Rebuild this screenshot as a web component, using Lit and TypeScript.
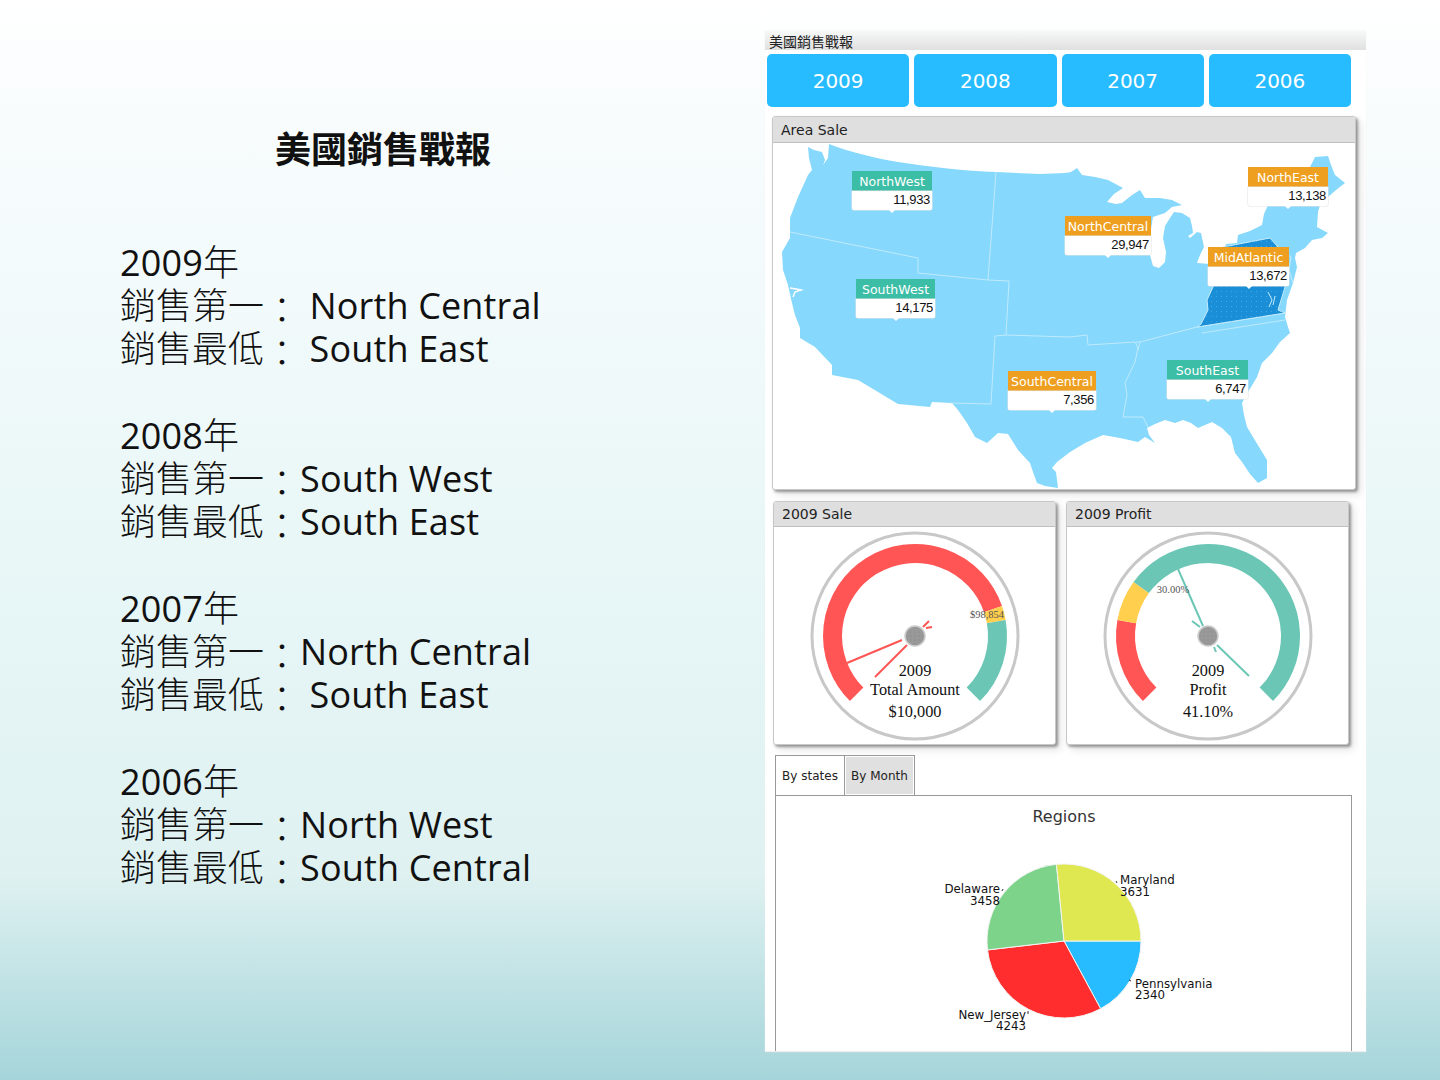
import { LitElement, html, css, svg } from "lit";
import { customElement } from "lit/decorators.js";

const US = `M829 144 C850 152 875 158 898 162 C930 167 965 171 996 172 L1040 174 L1065 173 L1071 172 L1077 168 L1082 175 L1095 177 L1108 180 L1123 188 L1114 194 L1107 202 L1116 204 L1122 203 L1132 195 L1140 190 L1145 198 L1160 198 L1172 200 L1182 205 L1172 207 L1165 213 L1153 217 L1150 235 L1150 255 L1153 266 L1159 268 L1165 262 L1166 252 L1163 238 L1165 226 L1170 218 L1174 212 L1182 213 L1190 218 L1192 226 L1193 233 L1188 236 L1190 238 L1197 232 L1201 233 L1204 247 L1200 255 L1197 263 L1210 264 L1222 263 L1224 250 L1226 244 L1237 243 L1238 235 L1250 231 L1262 225 L1264 214 L1268 205 L1300 180 L1310 167 L1315 157 L1328 156 L1331 165 L1335 175 L1345 183 L1336 190 L1328 197 L1320 205 L1318 212 L1317 227 L1328 233 L1322 238 L1312 240 L1305 248 L1296 253 L1295 258 L1297 267 L1293 283 L1287 300 L1285 317 L1288 327 L1290 333 L1280 342 L1272 353 L1262 363 L1257 377 L1248 392 L1242 403 L1244 415 L1247 427 L1256 442 L1267 460 L1267 478 L1258 483 L1250 474 L1242 462 L1235 453 L1231 437 L1222 428 L1212 422 L1198 428 L1191 423 L1183 420 L1175 423 L1165 420 L1155 424 L1147 428 L1149 435 L1155 443 L1145 437 L1138 442 L1120 438 L1103 435 L1085 443 L1070 452 L1057 462 L1052 468 L1056 472 L1058 488 L1045 486 L1037 483 L1033 472 L1030 463 L1018 450 L1008 434 L998 433 L987 443 L975 437 L967 423 L958 410 L952 403 L932 402 L930 407 L898 404 L858 380 L832 375 L832 365 L815 347 L800 338 L800 328 L795 315 L792 303 L788 285 L783 270 L782 252 L790 238 L790 218 L798 197 L808 175 L812 170 L809 158 L808 147 L814 150 L822 152 L825 160 L823 165 L828 158 L829 144 Z`;

const MID = `M1197 327 L1201 324 L1208 310 L1207 300 L1213 287 L1220 262 L1223 247 L1270 238 L1278 247 L1288 255 L1286 270 L1285 287 L1278 310 L1285 313 Z`;

type Lab = { n: string; v: string; x: number; y: number; w: number; c: string };
const LABELS: Lab[] = [
  { n: "NorthWest", v: "11,933", x: 852, y: 171, w: 80, c: "green" },
  { n: "NorthEast", v: "13,138", x: 1248, y: 167, w: 80, c: "orange" },
  { n: "NorthCentral", v: "29,947", x: 1065, y: 216, w: 86, c: "orange" },
  { n: "MidAtlantic", v: "13,672", x: 1208, y: 247, w: 81, c: "orange" },
  { n: "SouthWest", v: "14,175", x: 856, y: 279, w: 79, c: "green" },
  { n: "SouthCentral", v: "7,356", x: 1008, y: 371, w: 88, c: "orange" },
  { n: "SouthEast", v: "6,747", x: 1167, y: 360, w: 81, c: "green" },
];

function pt(cx: number, cy: number, r: number, a: number) {
  const t = ((a - 135) * Math.PI) / 180;
  return [cx + r * Math.sin(t), cy - r * Math.cos(t)];
}
function arc(cx: number, cy: number, r: number, a: number, b: number) {
  const [x1, y1] = pt(cx, cy, r, a);
  const [x2, y2] = pt(cx, cy, r, b);
  return `M${x1.toFixed(2)} ${y1.toFixed(2)} A${r} ${r} 0 ${b - a > 180 ? 1 : 0} 1 ${x2.toFixed(2)} ${y2.toFixed(2)}`;
}

type G = {
  title: string;
  bands: [number, number, string][];
  lines: [number, number, number, number][];
  color: string;
  tick: string;
  tx: number;
  ty: number;
  text: string[];
};
const RED = "#ff5555", YEL = "#ffcf4d", TEAL = "#6cc6b6";
const SALE: G = {
  title: "2009 Sale",
  bands: [[0, 206, RED], [206, 215, YEL], [215, 270, TEAL]],
  lines: [[-68, 27, -13, 4], [-40, 41, -8, 9], [11, -8, 17, -9], [8, -9, 14, -15]],
  color: RED,
  tick: "$98,854",
  tx: 72,
  ty: -22,
  text: ["2009", "Total Amount", "$10,000"],
};
const PROFIT: G = {
  title: "2009 Profit",
  bands: [[0, 55, RED], [55, 81, YEL], [81, 270, TEAL]],
  lines: [[-30, -67, -5, -10], [41, 40, 9, 9], [-16, -15, -8, -9], [6, 11, 8, 16]],
  color: TEAL,
  tick: "30.00%",
  tx: -35,
  ty: -47,
  text: ["2009", "Profit", "41.10%"],
};

const PIE = [
  { v: 2340, c: "#26bcff" },
  { v: 4243, c: "#ff2d2d" },
  { v: 3458, c: "#7dd389" },
  { v: 3631, c: "#dfe850" },
];
function pieSlices() {
  const total = PIE.reduce((s, p) => s + p.v, 0);
  let a = 0;
  const cx = 1064, cy = 941, r = 77;
  return PIE.map((p) => {
    const b = a + (p.v / total) * Math.PI * 2;
    const d = `M${cx} ${cy} L${cx + r * Math.cos(a)} ${cy + r * Math.sin(a)} A${r} ${r} 0 ${b - a > Math.PI ? 1 : 0} 1 ${cx + r * Math.cos(b)} ${cy + r * Math.sin(b)} Z`;
    a = b;
    return svg`<path d=${d} fill=${p.c} stroke="#f4f4f4" stroke-width="1"></path>`;
  });
}

@customElement("app-root")
export class AppRoot extends LitElement {
  static styles = css`
    :host {
      display: block;
      width: 1440px;
      height: 1080px;
      overflow: hidden;
      background: linear-gradient(to bottom, #ffffff 0, #f8fcfd 120px, #f2fafb 300px, #e7f6f6 600px, #dff1f1 875px, #a5d5da 1080px);
      font-family: "DejaVu Sans", sans-serif;
    }
    .page { display: flex; height: 1080px; }
    .left {
      width: 765px;
      box-sizing: border-box;
      padding: 123px 0 0 120px;
      font-family: "Open Sans", "Noto Sans CJK TC", sans-serif;
      color: #111;
      font-size: 36px;
    }
    .headline {
      width: 526px;
      text-align: center;
      font-weight: 700;
      font-family: "Noto Sans CJK TC", sans-serif;
      font-size: 36px;
      line-height: 48px;
      margin-bottom: 70px;
    }
    .block { margin-bottom: 44px; }
    .line { height: 43px; line-height: 43px; white-space: pre; letter-spacing: 0.15px; }
    .cjk { font-weight: 300; letter-spacing: 0; }
    .colon { display: inline-block; font-weight: 300; letter-spacing: 0; transform: translateY(5px); }
    .panel {
      width: 601px;
      height: 1021px;
      margin-top: 30px;
      background: #fff;
      overflow: hidden;
      box-shadow: 0 1px 1px #eee;
    }
    .bar {
      height: 20px;
      box-sizing: border-box;
      padding-left: 4px;
      line-height: 23px;
      font-size: 14px;
      color: #222;
      font-family: "Noto Sans CJK TC", sans-serif;
      background: linear-gradient(to bottom, #f8f9f9, #e0e0e0);
    }
    .years {
      display: grid;
      grid-template-columns: repeat(4, 142.25px);
      gap: 5px;
      margin: 4px 0 0 2px;
    }
    .year {
      height: 53px;
      border-radius: 5px;
      background: #26bcff;
      color: #fff;
      font-size: 20px;
      display: flex;
      align-items: center;
      justify-content: center;
    }
    .card {
      box-sizing: border-box;
      background: #fff;
      border: 1px solid #c8c8c8;
      border-radius: 3px;
      box-shadow: 2px 2px 3px rgba(0, 0, 0, 0.38), 5px 5px 8px rgba(0, 0, 0, 0.1);
      overflow: hidden;
    }
    .card-head {
      height: 25px;
      box-sizing: border-box;
      padding-left: 8px;
      line-height: 24px;
      font-size: 14px;
      color: #222;
      background-color: #dfdfdf;
      background-image: radial-gradient(#d4d4d4 0.6px, transparent 0.7px);
      background-size: 4px 4px;
      border-bottom: 1px solid #c0c0c0;
    }
    .map-card { width: 584px; height: 374px; margin: 9px 0 0 7px; }
    .map-card .card-head { height: 26px; line-height: 26px; }
    .map { position: relative; height: 346px; }
    .map svg { display: block; }
    .tag { position: absolute; box-sizing: border-box; height: 39px; }
    .tag-name {
      height: 20px;
      line-height: 21px;
      text-align: center;
      color: #fff;
      font-size: 12.5px;
    }
    .tag-name.green { background: #3cbda6; }
    .tag-name.orange { background: #ee9f1f; }
    .tag-value {
      position: relative;
      height: 19px;
      line-height: 18px;
      padding-right: 2px;
      box-sizing: border-box;
      text-align: right;
      background: #fff;
      color: #111;
      font-family: "Liberation Sans", sans-serif;
      font-size: 13px;
      letter-spacing: -0.35px;
      border-radius: 0 0 2px 2px;
      box-shadow: 0 0 0 0.5px #e4e4e4;
    }
    .tag-value::after {
      content: "";
      position: absolute;
      left: 50%;
      bottom: -3px;
      margin-left: -3px;
      border: 3px solid transparent;
      border-bottom: 0;
      border-top-color: #fff;
    }
    .gauges { display: flex; gap: 10px; margin: 11px 0 0 8px; }
    .gauge-card { width: 283px; height: 244px; }
    .gauge-card svg { display: block; }
    .tabs { margin: 10px 0 0 10px; width: 577px; }
    .tab-row { display: flex; height: 41px; }
    .tab {
      box-sizing: border-box;
      height: 41px;
      width: 70px;
      border: 1px solid #999;
      margin-right: -1px;
      font-size: 12px;
      color: #222;
      display: flex;
      align-items: center;
      justify-content: center;
      background: #fff;
    }
    .tab.off { width: 71px; background: #e0e0e0; box-shadow: inset 0 0 0 1px #fff; }
    .tab-box {
      box-sizing: border-box;
      margin-top: -1px;
      height: 400px;
      border: 1px solid #999;
    }
    .tab-box svg { display: block; }
    .gt { font-family: "Liberation Serif", serif; font-size: 16.3px; fill: #111; text-anchor: middle; }
    .tick { font-family: "Liberation Serif", serif; font-size: 10.5px; fill: #555; text-anchor: middle; }
    .pl { font-family: "DejaVu Sans", sans-serif; font-size: 11.8px; fill: #111; }
    .end { text-anchor: end; }
    .chart-title { font-family: "DejaVu Sans", sans-serif; font-size: 16px; fill: #333; text-anchor: middle; }
  `;

  gauge(g: G) {
    const cx = 141, cy = 109;
    return html`<div class="card gauge-card">
      <div class="card-head">${g.title}</div>
      <svg width="281" height="217" viewBox="0 0 281 217">
        <defs>
          <pattern id="hub" width="4" height="4" patternUnits="userSpaceOnUse">
            <circle cx="1" cy="1" r="0.5" fill="#777"></circle>
          </pattern>
        </defs>
        <circle cx=${cx} cy=${cy} r="103" fill="#fff" stroke="#c8c8c8" stroke-width="3"></circle>
        ${g.bands.map((b) => svg`<path d=${arc(cx, cy, 82.5, b[0], b[1])} fill="none" stroke=${b[2]} stroke-width="19"></path>`)}
        ${g.lines.map((l) => svg`<line x1=${cx + l[0]} y1=${cy + l[1]} x2=${cx + l[2]} y2=${cy + l[3]} stroke=${g.color} stroke-width="2"></line>`)}
        <circle cx=${cx} cy=${cy} r="10" fill="#999" stroke="#ccc" stroke-width="1.5"></circle>
        <circle cx=${cx} cy=${cy} r="8" fill="url(#hub)"></circle>
        <text class="tick" x=${cx + g.tx} y=${cy + g.ty + 4}>${g.tick}</text>
        <text class="gt" x=${cx} y="149">${g.text[0]}</text>
        <text class="gt" x=${cx} y="168">${g.text[1]}</text>
        <text class="gt" x=${cx} y="190">${g.text[2]}</text>
      </svg>
    </div>`;
  }

  line(l: string) {
    const parts = l.split(/([\u4e00-\u9fff]+|：)/).filter((p) => p);
    return html`<div class="line">${parts.map((p) =>
      p === "：" ? html`<span class="colon">${p}</span>` : /[\u4e00-\u9fff]/.test(p) ? html`<span class="cjk">${p}</span>` : p
    )}</div>`;
  }

  render() {
    const blocks = [
      ["2009年", "銷售第一： North Central", "銷售最低： South East"],
      ["2008年", "銷售第一：South West", "銷售最低：South East"],
      ["2007年", "銷售第一：North Central", "銷售最低： South East"],
      ["2006年", "銷售第一：North West", "銷售最低：South Central"],
    ];
    return html`<div class="page">
      <div class="left">
        <div class="headline">美國銷售戰報</div>
        ${blocks.map((b) => html`<div class="block">${b.map((l) => this.line(l))}</div>`)}
      </div>
      <div class="panel">
        <div class="bar">美國銷售戰報</div>
        <div class="years">
          ${["2009", "2008", "2007", "2006"].map((y) => html`<div class="year">${y}</div>`)}
        </div>
        <div class="card map-card">
          <div class="card-head">Area Sale</div>
          <div class="map">
            <svg width="582" height="346" viewBox="773 143 582 346">
              <defs>
                <pattern id="dots" width="5" height="5" patternUnits="userSpaceOnUse">
                  <circle cx="1.5" cy="1.5" r="0.5" fill="#4fb0ea"></circle>
                </pattern>
              </defs>
              <path d=${US} fill="#86d8fc"></path>
              <path d="M790 288 L796 289 L801 290 L795 292 L793 297" fill="none" stroke="#fff" stroke-width="1.5"></path>
              <g fill="none" stroke="#bfeafc" stroke-width="1">
                <path d="M790 232 L918 258 L918 273 L988 280 L1009 281 L1006 335"></path>
                <path d="M996 172 L988 280"></path>
                <path d="M1006 335 L995 336 L991 404 L950 403"></path>
                <path d="M1006 335 L1070 337 L1087 335 L1088 345 L1135 342 L1138 348 L1135 362 L1125 383 L1127 395 L1123 417 L1143 417 L1148 427"></path>
                <path d="M1136 342 L1140 342 L1138 350"></path>
                <path d="M1140 342 L1197 327 L1285 313"></path>
                <path d="M1202 333 L1285 320"></path>
              </g>
              <path d=${MID} fill="#1a8fd8" stroke="#c5ecfc" stroke-width="1"></path>
              <path d=${MID} fill="url(#dots)"></path>
              <path d="M1268 292 L1272 300 L1269 307 M1275 296 L1273 305" fill="none" stroke="#c5ecfc" stroke-width="1"></path>
              <path d="M1288 255 L1291 257 L1289 270 L1293 283" fill="none" stroke="#c5ecfc" stroke-width="1"></path>
            </svg>
            ${LABELS.map(
              (l) => html`<div class="tag" style="left:${l.x - 773}px;top:${l.y - 143}px;width:${l.w}px">
                <div class="tag-name ${l.c}">${l.n}</div>
                <div class="tag-value">${l.v}</div>
              </div>`
            )}
          </div>
        </div>
        <div class="gauges">${this.gauge(SALE)}${this.gauge(PROFIT)}</div>
        <div class="tabs">
          <div class="tab-row">
            <div class="tab">By states</div>
            <div class="tab off">By Month</div>
          </div>
          <div class="tab-box">
            <svg width="575" height="398" viewBox="776 796 575 398">
              <text class="chart-title" x="1064" y="822">Regions</text>
              ${pieSlices()}
              <path d="M1117 883 L1116 881 M1003 889 L1002 891 M1131 981 L1129 980 M1028 1011 L1028 1014" stroke="#333" fill="none"></path>
              <text class="pl" x="1120" y="884">Maryland</text>
              <text class="pl" x="1120" y="896">3631</text>
              <text class="pl end" x="1000" y="893">Delaware</text>
              <text class="pl end" x="1000" y="905">3458</text>
              <text class="pl" x="1135" y="988">Pennsylvania</text>
              <text class="pl" x="1135" y="999">2340</text>
              <text class="pl end" x="1026" y="1019">New_Jersey</text>
              <text class="pl end" x="1026" y="1030">4243</text>
            </svg>
          </div>
        </div>
      </div>
    </div>`;
  }
}
